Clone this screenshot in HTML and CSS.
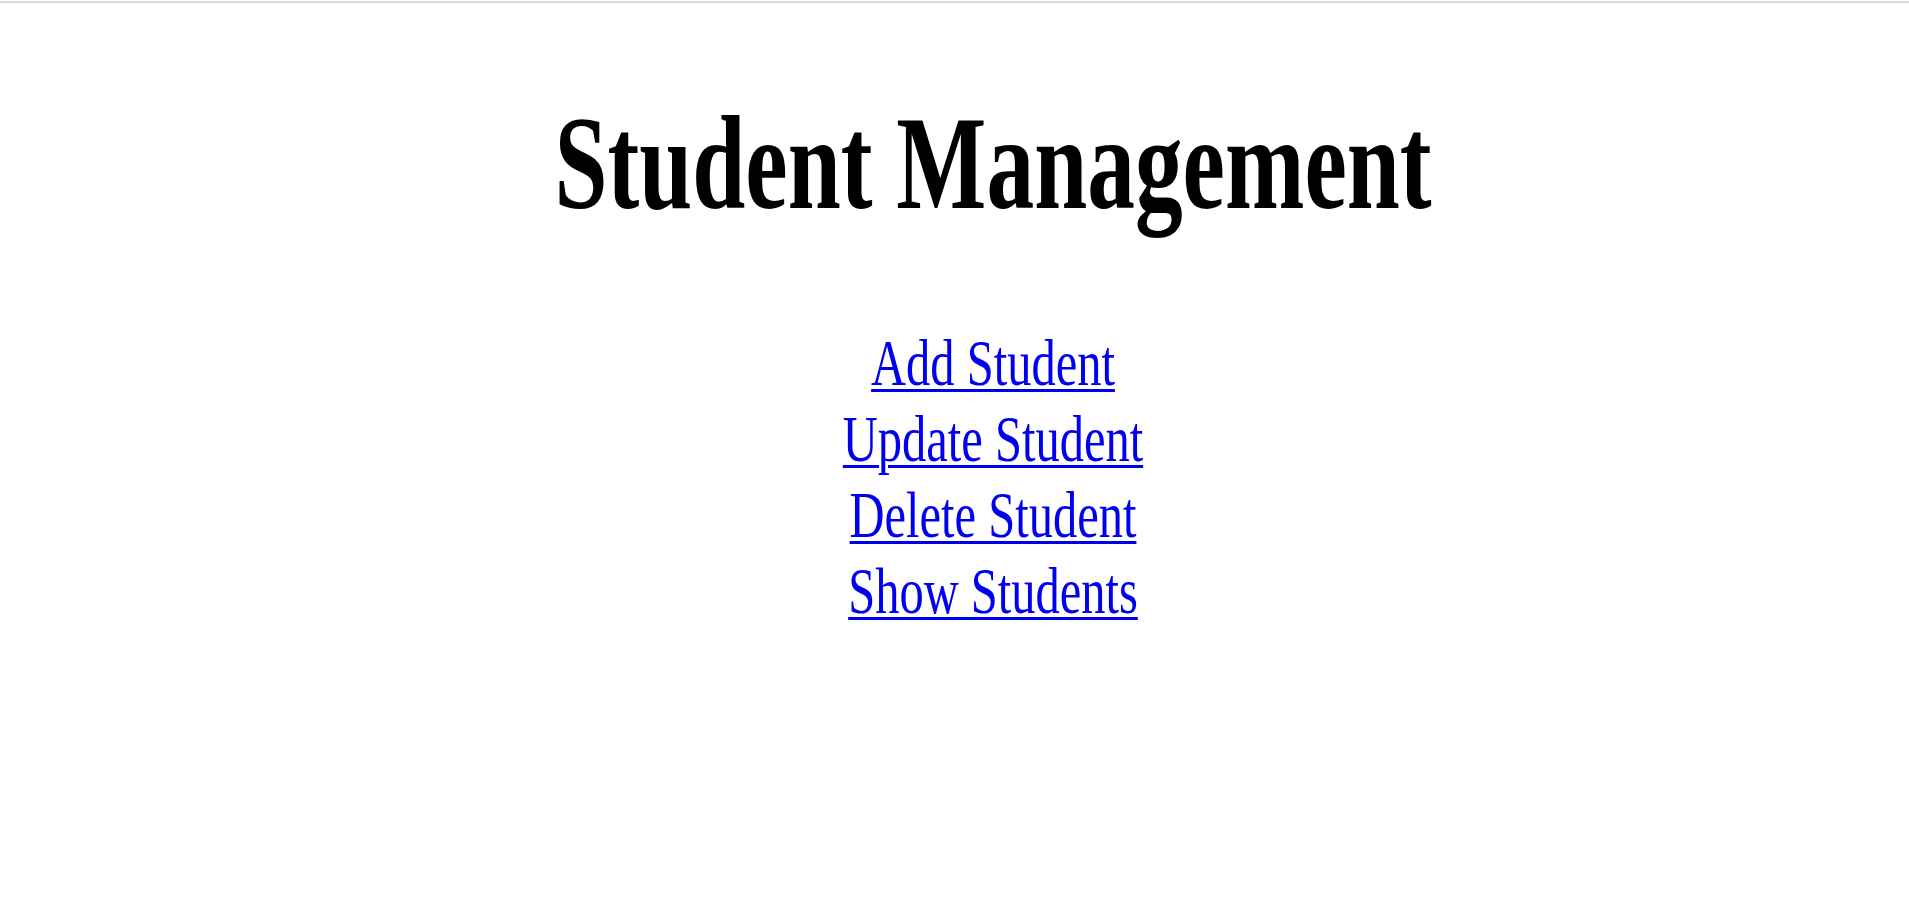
FILE: index.html
```html
<!DOCTYPE html>
<html lang="en">
<head>
<meta charset="utf-8">
<title>Student Management</title>
<link rel="stylesheet" href="styles.css">
</head>
<body>
<div class="topline"></div>
<main class="page">
  <h1 class="title">Student Management</h1>
  <nav class="menu">
    <a class="menu-link" href="#">Add Student</a>
    <a class="menu-link" href="#">Update Student</a>
    <a class="menu-link" href="#">Delete Student</a>
    <a class="menu-link" href="#">Show Students</a>
  </nav>
</main>
</body>
</html>
```
FILE: styles.css
```css
html, body {
  margin: 0;
  padding: 0;
  background: #ffffff;
}
body {
  font-family: "Liberation Serif", "Times New Roman", serif;
  padding-top: 1px;
}
.topline {
  height: 2px;
  background: #d9d9d9;
}
.page {
  padding-left: 77px;
  padding-top: 93px;
  display: flex;
  flex-direction: column;
  align-items: stretch;
}
.title {
  margin: 0;
  font-size: 134px;
  line-height: 134px;
  font-weight: bold;
  color: #000000;
  text-align: center;
  transform: scaleX(0.712);
  transform-origin: center;
}
.menu {
  margin-top: 95px;
  display: flex;
  flex-direction: column;
  align-items: stretch;
}
.menu-link {
  display: block;
  font-size: 65px;
  line-height: 76px;
  text-align: center;
  color: #0000ee;
  text-decoration: underline;
  text-decoration-thickness: 3px;
  text-underline-offset: 4px;
  transform: scaleX(0.746);
  transform-origin: center;
}
```
